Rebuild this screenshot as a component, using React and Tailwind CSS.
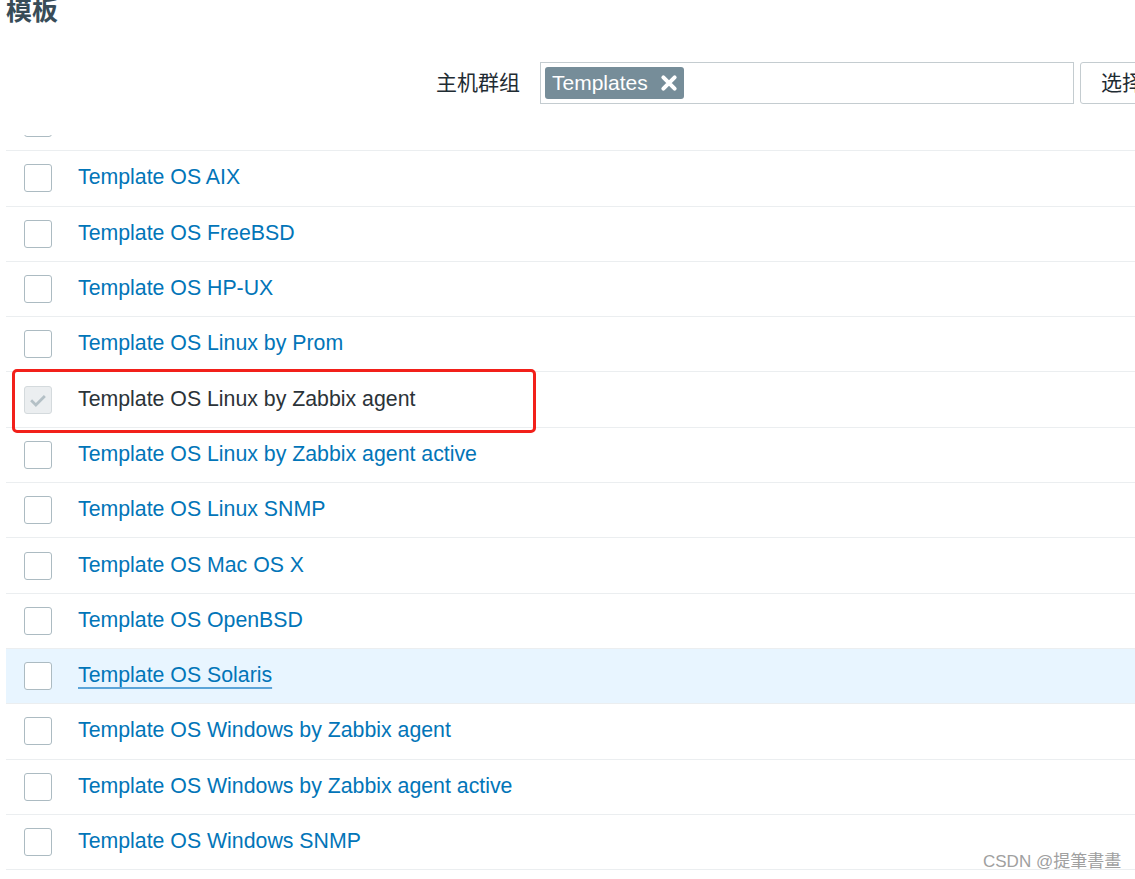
import React from "react";

const templates = [
  { name: "Template OS AIX" },
  { name: "Template OS FreeBSD" },
  { name: "Template OS HP-UX" },
  { name: "Template OS Linux by Prom" },
  { name: "Template OS Linux by Zabbix agent", linked: true },
  { name: "Template OS Linux by Zabbix agent active" },
  { name: "Template OS Linux SNMP" },
  { name: "Template OS Mac OS X" },
  { name: "Template OS OpenBSD" },
  { name: "Template OS Solaris", hover: true },
  { name: "Template OS Windows by Zabbix agent" },
  { name: "Template OS Windows by Zabbix agent active" },
  { name: "Template OS Windows SNMP" },
];

const Checkbox = ({ checked }) =>
  checked ? (
    <span className="flex h-[28px] w-[28px] shrink-0 items-center justify-center rounded-[3px] border border-[#d4dadd] bg-[#ebeef0]">
      <svg viewBox="0 0 16 16" className="h-[20px] w-[20px]">
        <path d="M2.5 8.2l3.8 3.8L13.5 4.8" fill="none" stroke="#b4c0c6" strokeWidth="2.2" />
      </svg>
    </span>
  ) : (
    <span className="block h-[28px] w-[28px] shrink-0 rounded-[3px] border border-[#acbbc2] bg-white" />
  );

const Row = ({ item }) => (
  <div
    className={`flex h-[55.3px] items-center border-b border-[#ebeef0] pl-[18px] ${
      item.hover ? "bg-[#e8f5ff]" : ""
    }`}
  >
    <Checkbox checked={item.linked} />
    <span
      className={`ml-[26px] text-[21.3px] ${
        item.linked
          ? "text-[#2b3338]"
          : item.hover
          ? "text-[#0275b8] underline decoration-[#5ba4d8] underline-offset-[5px]"
          : "text-[#0275b8]"
      }`}
    >
      {item.name}
    </span>
  </div>
);

export default function App() {
  return (
    <div className="relative h-[879px] w-[1135px] overflow-hidden bg-white font-['Liberation_Sans','Noto_Sans_CJK_SC',sans-serif]">
      {/* Header */}
      <h1 className="ml-[6px] -mt-[6px] text-[26px] font-bold leading-[34px] text-[#384c58]">模板</h1>

      {/* Filter */}
      <div className="mt-[34px] flex items-center">
        <span className="ml-[436px] w-[104px] shrink-0 text-[21px] text-[#1f2c33]">主机群组</span>
        <div className="flex h-[42px] w-[534px] shrink-0 items-center border border-[#c4ccd0] bg-white px-[4px]">
          <span className="flex h-[32px] items-center gap-[12px] rounded-[3px] bg-[#768d99] pl-[7px] pr-[6px] text-[21px] text-white">
            Templates
            <svg viewBox="0 0 16 16" className="h-[18px] w-[18px]">
              <path d="M3 3l10 10M13 3L3 13" stroke="white" strokeWidth="3.6" strokeLinecap="round" />
            </svg>
          </span>
        </div>
        <button className="ml-[6px] h-[42px] w-[90px] shrink-0 rounded-[3px] border border-[#c4ccd0] bg-white pl-[20px] text-left text-[21px] text-[#1f2c33]">
          选择
        </button>
      </div>

      {/* List (scrolled) */}
      <div className="ml-[6px] mt-[31px] h-[757px] overflow-hidden">
        <div className="-mt-[39px]">
          <Row item={{ name: "Template OS Linux" }} />
          {templates.map((t) => (
            <Row key={t.name} item={t} />
          ))}
        </div>
      </div>

      {/* Annotation */}
      <div className="pointer-events-none absolute left-[12px] top-[369px] h-[64px] w-[524px] rounded-[5px] border-[3px] border-[#f2201a]" />

      {/* Watermark */}
      <span className="absolute left-[983px] top-[849px] text-[17px] text-[#a0a0a0]">CSDN @提筆書畫</span>
    </div>
  );
}
